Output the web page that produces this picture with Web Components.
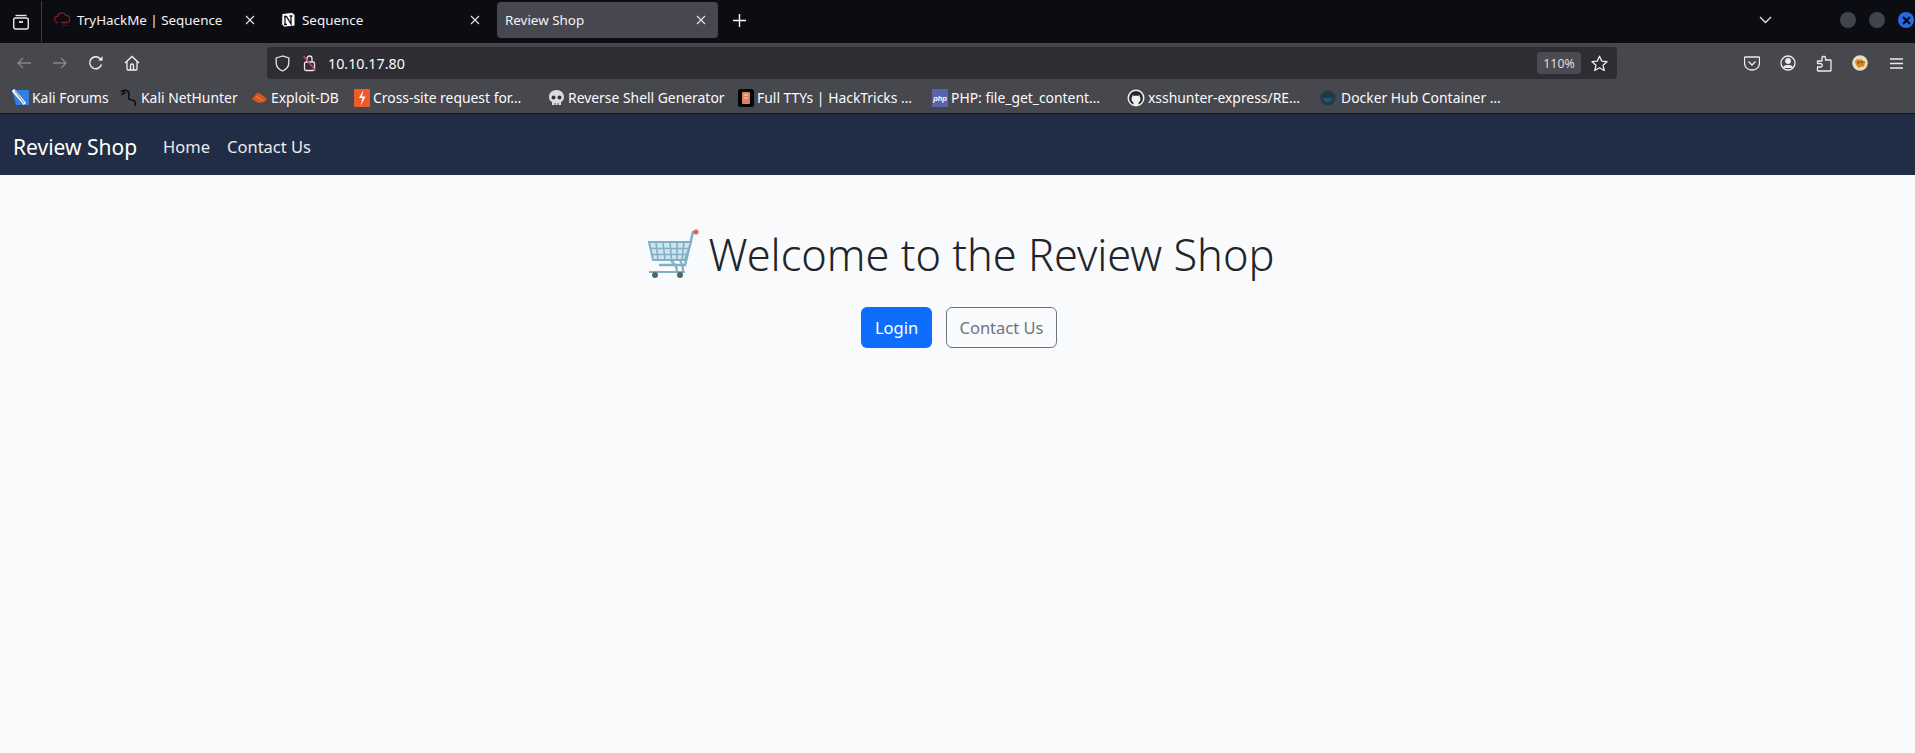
<!DOCTYPE html>
<html lang="en">
<head>
<meta charset="utf-8">
<title>Review Shop</title>
<style>
  html, body { margin: 0; height: 100%; background: #f9fafc; }
  body { font-family: "Noto Sans", "Open Sans", sans-serif; display: flex; flex-direction: column; height: 753px; overflow: hidden; }
</style>
</head>
<body>
<browser-tabs>
  <browser-tab slot="tabs" label="TryHackMe | Sequence" width="225" icon="thm"></browser-tab>
  <browser-tab slot="tabs" label="Sequence" width="225" icon="notion"></browser-tab>
  <browser-tab slot="tabs" label="Review Shop" width="221" active></browser-tab>
</browser-tabs>
<nav-toolbar url="10.10.17.80" zoom="110%"></nav-toolbar>
<bookmark-bar>
  <bookmark-item width="108" icon="kali">Kali Forums</bookmark-item>
  <bookmark-item width="132" icon="hunter">Kali NetHunter</bookmark-item>
  <bookmark-item width="102" icon="exploit">Exploit-DB</bookmark-item>
  <bookmark-item width="194" icon="csrf">Cross-site request for…</bookmark-item>
  <bookmark-item width="190" icon="skull">Reverse Shell Generator</bookmark-item>
  <bookmark-item width="194" icon="book">Full TTYs | HackTricks …</bookmark-item>
  <bookmark-item width="195" icon="php">PHP: file_get_content…</bookmark-item>
  <bookmark-item width="193" icon="github">xsshunter-express/RE…</bookmark-item>
  <bookmark-item width="200" icon="docker">Docker Hub Container …</bookmark-item>
</bookmark-bar>
<shop-navbar brand="Review Shop">
  <a href="#">Home</a>
  <a href="#">Contact Us</a>
</shop-navbar>
<shop-hero></shop-hero>

<script>
const ICONS = {
  thm: `<svg width="18" height="18" viewBox="0 0 18 18" fill="none" stroke="#8c1a20" stroke-width="1.3"><path d="M4 11.5h-.5a3 3 0 0 1 0-6 4.5 4.5 0 0 1 8.4-1.2A3.4 3.4 0 0 1 15.5 8a3 3 0 0 1-2 3.5H7"/><path d="M8 14.500h6" opacity=".5"/></svg>`,
  notion: `<svg width="18" height="18" viewBox="0 0 18 18"><path d="M3 2.5 13 1.5l3 2.2V15l-11 1.2-2.4-3z" fill="#fff" stroke="#111" stroke-width="1"/><path d="M6 5.5v8M6 5.5h1.5l4.5 7.5V5M5 5.5h3M10.5 5h3M5 13.5h3" fill="none" stroke="#111" stroke-width="1.3"/></svg>`,
  kali: `<svg width="17" height="17" viewBox="0 0 17 17"><path d="M0 1h17v15H4z" fill="#2f7fe0"/><path d="M1 1l12 14" stroke="#f4f6f8" stroke-width="3.4"/><path d="M3 2l9 12" stroke="#5b6470" stroke-width=".8"/></svg>`,
  hunter: `<svg width="18" height="18" viewBox="0 0 18 18" fill="none" stroke="#0c0c0c" stroke-width="1.5"><path d="M1 3c3-3 7-2 8 1s-2 4 0 6 5 0 6 3 0 3 0 4"/><path d="M3 1l2 4M1 6l3-2"/></svg>`,
  exploit: `<svg width="16" height="14" viewBox="0 0 16 14"><path d="M0 8l5-6 4 1 6 5-3 3-6 1z" fill="#d5581d"/><path d="M4 5l7 5" stroke="#ec8b4a" stroke-width="1"/></svg>`,
  csrf: `<svg width="16" height="18" viewBox="0 0 16 18"><rect width="16" height="18" rx="1" fill="#ef5a2b"/><path d="M9.500 1 5 9h3.500L6.500 17 11.500 7.500H8z" fill="#fff"/></svg>`,
  skull: `<svg width="17" height="18" viewBox="0 0 17 18"><path d="M8.5 1C4 1 1 4 1 8c0 2.5 1 4 3 5v3h9v-3c2-1 3-2.5 3-5 0-4-3-7-7.5-7z" fill="#dcdcdc"/><circle cx="5.5" cy="8.5" r="2" fill="#333"/><circle cx="11.5" cy="8.5" r="2" fill="#333"/><path d="M7 16v-2M10 16v-2" stroke="#555"/></svg>`,
  book: `<svg width="16" height="18" viewBox="0 0 16 18"><rect width="16" height="18" rx="2.5" fill="#050505"/><rect x="4" y="3" width="8" height="12" rx="1" fill="#e0835c"/><path d="M6 6h4M6 9h4" stroke="#f5d9c5"/></svg>`,
  php: `<svg width="16" height="18" viewBox="0 0 16 18"><rect width="16" height="18" fill="#5a64a8"/><text x="8" y="11.5" text-anchor="middle" font-size="7.5" font-style="italic" font-weight="700" font-family="Liberation Sans, sans-serif" fill="#fff">php</text></svg>`,
  github: `<svg width="18" height="18" viewBox="0 0 18 18"><circle cx="9" cy="9" r="8.5" fill="#f2f2f2"/><circle cx="9" cy="9" r="7" fill="#2a2a2e"/><path d="M6.500 16v-2.500c-1.500-.7-2-2-2-3.500 0-.9.300-1.600.7-2.100-.1-.6 0-1.300.2-1.700.7 0 1.200.3 1.700.7a6 6 0 0 1 3.800 0c.5-.4 1-.7 1.700-.7.200.4.300 1.100.2 1.700.400.500.7 1.200.7 2.100 0 1.500-.5 2.800-2 3.500V16z" fill="#f2f2f2"/></svg>`,
  docker: `<svg width="18" height="18" viewBox="0 0 18 18"><circle cx="8" cy="9" r="7.500" fill="#1d3b4a"/><path d="M3 9h9c0 3-2 4-5 4s-4-2-4-4z" fill="#24566c"/></svg>`
};

class BrowserTabs extends HTMLElement {
  connectedCallback() {
    this.attachShadow({ mode: 'open' });
    this.shadowRoot.innerHTML = `
      <style>
        :host { display: flex; align-items: center; height: 43px; flex: none; background: #0c0c13; color: #fbfbfe; }
        .tabs-btn { width: 42px; height: 41px; flex: none; display: flex; align-items: center; justify-content: center; border-right: 1px solid #3c3c44; box-sizing: border-box; }
        .list { display: flex; align-items: center; height: 100%; }
        .plus { width: 42px; display: flex; justify-content: center; margin-bottom: 3px; }
        .spacer { flex: 1; }
        .chevron { width: 20px; display: flex; justify-content: center; margin-right: 65px; margin-bottom: 3px; }
        .dots { display: flex; gap: 13px; align-items: center; margin-right: 1px; margin-bottom: 3px; }
        .dot { width: 16px; height: 16px; border-radius: 50%; background: #41434e; }
        .dot.close { background: #2a68e4; display: flex; align-items: center; justify-content: center; }
      </style>
      <div class="tabs-btn">
        <svg width="18" height="17" viewBox="0 0 18 17" fill="none" stroke="#e8e8ec" stroke-width="1.4"><rect x="1.7" y="5" width="14.6" height="11" rx="2"/><path d="M3.5 2.5h11"/><path d="M7 9h4" stroke-width="1.8"/></svg>
      </div>
      <div class="list"><slot name="tabs"></slot></div>
      <div class="plus">
        <svg width="13" height="13" viewBox="0 0 13 13" stroke="#fbfbfe" stroke-width="1.4"><path d="M6.5 0v13M0 6.5h13"/></svg>
      </div>
      <div class="spacer"></div>
      <div class="chevron">
        <svg width="13" height="8" viewBox="0 0 13 8" fill="none" stroke="#e6e6ea" stroke-width="1.3"><path d="M1 1l5.5 5.500L12 1"/></svg>
      </div>
      <div class="dots">
        <div class="dot"></div>
        <div class="dot"></div>
        <div class="dot close"><svg width="9" height="9" viewBox="0 0 9 9" stroke="#0c0c13" stroke-width="2.2"><path d="M1 1l7 7M8 1L1 8"/></svg></div>
      </div>
    `;
  }
}

class BrowserTab extends HTMLElement {
  connectedCallback() {
    const active = this.hasAttribute('active');
    const icon = ICONS[this.getAttribute('icon')];
    this.attachShadow({ mode: 'open' });
    this.shadowRoot.innerHTML = `
      <style>
        :host { display: flex; align-items: center; height: 36px; box-sizing: border-box; padding: 0 10px 0 ${active ? 8 : 12}px; width: ${this.getAttribute('width')}px; border-radius: 4px; font-size: 13.4px; color: #f4f4f6; margin-bottom: 3px; ${active ? 'background: #47474f; margin-left: 5px;' : ''} }
        .ic { display: flex; margin-right: 5px; flex: none; }
        .label { flex: 1; white-space: nowrap; }
        .x { flex: none; display: flex; margin-right: 2px; }
      </style>
      ${icon ? `<span class="ic">${icon}</span>` : ''}
      <span class="label">${this.getAttribute('label')}</span>
      <span class="x"><svg width="10" height="10" viewBox="0 0 10 10" stroke="#e4e4e8" stroke-width="1.1"><path d="M1 1l8 8M9 1L1 9"/></svg></span>
    `;
  }
}

class NavToolbar extends HTMLElement {
  connectedCallback() {
    this.attachShadow({ mode: 'open' });
    this.shadowRoot.innerHTML = `
      <style>
        :host { display: flex; align-items: center; height: 32px; padding: 4px 0 1px; flex: none; background: #47474e; box-sizing: content-box; color: #fbfbfe; }
        .nav { display: flex; width: 267px; flex: none; padding-left: 6px; box-sizing: border-box; }
        .nav span { width: 36px; display: flex; justify-content: center; align-items: center; }
        .url { width: 1350px; height: 32px; background: #2d2d33; border-radius: 4px; display: flex; align-items: center; flex: none; box-sizing: border-box; padding-left: 8px; }
        .url .txt { font-size: 14.3px; margin-left: 11px; flex: 1; }
        .shield { display: flex; margin-right: 12px; }
        .lock { display: flex; }
        .badge { width: 44px; height: 22px; background: #4a4a50; border-radius: 3px; font-size: 12.4px; display: flex; align-items: center; justify-content: center; color: #dcdce0; }
        .star { width: 36px; display: flex; justify-content: center; }
        .right { display: flex; margin-left: 117px; }
        .right span { width: 36px; display: flex; justify-content: center; align-items: center; }
      </style>
      <div class="nav">
        <span><svg width="16" height="14" viewBox="0 0 16 14" fill="none" stroke="#85858b" stroke-width="1.3"><path d="M15 7H2M7 2 2 7l5 5"/></svg></span>
        <span><svg width="16" height="14" viewBox="0 0 16 14" fill="none" stroke="#85858b" stroke-width="1.3"><path d="M1 7h13M9 2l5 5-5 5"/></svg></span>
        <span><svg width="16" height="16" viewBox="0 0 16 16" fill="none" stroke="#f0f0f4" stroke-width="1.4"><path d="M13.500 9.500A6 6 0 1 1 12 3.500l2 1.800"/><path d="M14.500 1.200v4.400h-4.400z" fill="#f0f0f4" stroke="none"/></svg></span>
        <span><svg width="16" height="16" viewBox="0 0 16 16" fill="none" stroke="#f0f0f4" stroke-width="1.3"><path d="M1 8l7-6.500L15 8M3 6.500V14a1 1 0 0 0 1 1h8a1 1 0 0 0 1-1V6.500M6.500 15v-4.500a1.500 1.500 0 0 1 3 0V15"/></svg></span>
      </div>
      <div class="url">
        <span class="shield"><svg width="15" height="17" viewBox="0 0 15 17" fill="none" stroke="#e6e6ea" stroke-width="1.3"><path d="M7.500 1 1.200 3v5c0 4 3 6.500 6.300 8 3.300-1.500 6.300-4 6.300-8V3z"/></svg></span>
        <span class="lock"><svg width="15" height="18" viewBox="0 0 15 18" fill="none"><rect x="2.500" y="8" width="10" height="8.500" rx="1.500" stroke="#e6e6ea" stroke-width="1.3"/><path d="M5 8V4.500a2.500 2.500 0 0 1 5 0V8" stroke="#e6e6ea" stroke-width="1.3"/><path d="M1.500 2 13.500 16.500" stroke="#e0405a" stroke-width="1.3"/></svg></span>
        <span class="txt">${this.getAttribute('url')}</span>
        <span class="badge">${this.getAttribute('zoom')}</span>
        <span class="star"><svg width="17" height="17" viewBox="0 0 17 17" fill="none" stroke="#ececf0" stroke-width="1.3" stroke-linejoin="round"><path d="M8.500 1.200l2.200 4.900 5.300.6-4 3.500 1.200 5.300-4.700-2.800-4.700 2.800L5 10.200 1 6.700l5.300-.6z"/></svg></span>
      </div>
      <div class="right">
        <span><svg width="16" height="15" viewBox="0 0 16 15" fill="none" stroke="#ececf0" stroke-width="1.3"><path d="M1 1h14a.5.5 0 0 1 .5.500V7a7 7 0 0 1-7.500 7A7 7 0 0 1 .5 7V1.500A.5.500 0 0 1 1 1z"/><path d="M4.500 5.500 8 9l3.500-3.500"/></svg></span>
        <span><svg width="16" height="16" viewBox="0 0 16 16" fill="none" stroke="#ececf0" stroke-width="1.3"><circle cx="8" cy="8" r="7"/><circle cx="8" cy="6" r="2.300" fill="#ececf0"/><path d="M3.500 11.500c1-1.200 2.500-1.500 4.500-1.500s3.500.3 4.500 1.500V13h-9z" fill="#ececf0" stroke="none"/></svg></span>
        <span><svg width="16" height="17" viewBox="0 0 16 17" fill="none" stroke="#ececf0" stroke-width="1.3" stroke-linejoin="round"><path d="M7 1.500h1.500a1 1 0 0 1 1 1V5H14.500a.5.500 0 0 1 .5.500V15.500a.5.500 0 0 1-.5.500H2a.5.500 0 0 1-.5-.5V12H4.500a1.500 1.500 0 0 0 0-3.500H1.500V6H6V2.500a1 1 0 0 1 1-1z"/></svg></span>
        <span><svg width="16" height="16" viewBox="0 0 16 16"><circle cx="8" cy="8" r="7.800" fill="#e9dcc4"/><path d="M3 6c1-1 2-1 3-2l1.500 1L9 3.500l1 2 3 .5c.5 2.500-.5 5-2.500 6l-2-.5-1 1.500C5 12 3.500 9 3 6z" fill="#d9841c"/><circle cx="6.500" cy="7.500" r=".9" fill="#6a3a10"/><circle cx="10" cy="7" r=".9" fill="#6a3a10"/></svg></span>
        <span><svg width="13" height="11" viewBox="0 0 13 11" stroke="#ececf0" stroke-width="1.3"><path d="M0 1h13M0 5.500h13M0 10h13"/></svg></span>
      </div>
    `;
  }
}

class BookmarkBar extends HTMLElement {
  connectedCallback() {
    this.attachShadow({ mode: 'open' });
    this.shadowRoot.innerHTML = `
      <style>
        :host { display: flex; align-items: center; height: 31px; padding: 2px 0 0 12px; flex: none; background: #47474e; color: #fbfbfe; font-size: 13.9px; border-bottom: 1px solid #10141c; box-sizing: content-box; }
      </style>
      <slot></slot>
    `;
  }
}

class BookmarkItem extends HTMLElement {
  connectedCallback() {
    this.attachShadow({ mode: 'open' });
    this.shadowRoot.innerHTML = `
      <style>
        :host { display: flex; align-items: center; flex: none; width: ${this.getAttribute('width')}px; white-space: nowrap; }
        .ic { display: flex; flex: none; margin-right: 3px; }
      </style>
      <span class="ic">${ICONS[this.getAttribute('icon')] || ''}</span>
      <slot></slot>
    `;
  }
}

class ShopNavbar extends HTMLElement {
  connectedCallback() {
    this.attachShadow({ mode: 'open' });
    this.shadowRoot.innerHTML = `
      <style>
        :host { display: flex; align-items: center; height: 57px; padding: 4px 0 0 13px; flex: none; background: #212d44; color: #fff; }
        .brand { font-size: 21px; margin-right: 26px; white-space: nowrap; }
        .links { display: flex; gap: 17px; font-size: 16.5px; }
        ::slotted(a) { color: #e9ecf1; text-decoration: none; }
      </style>
      <span class="brand">${this.getAttribute('brand')}</span>
      <div class="links"><slot></slot></div>
    `;
  }
}

class ShopHero extends HTMLElement {
  connectedCallback() {
    this.attachShadow({ mode: 'open' });
    this.shadowRoot.innerHTML = `
      <style>
        :host { display: flex; flex-direction: column; align-items: center; flex: 1; background: #f9fafc; padding-top: 45px; box-sizing: border-box; color: #212529; }
        h1 { margin: 0 0 17px 6px; font-size: 43.3px; font-weight: 350; line-height: 70px; display: flex; align-items: center; gap: 10px; white-space: nowrap; }
        .actions { display: flex; gap: 14px; margin-left: 3px; }
        .btn { height: 41px; box-sizing: border-box; border-radius: 6px; display: flex; align-items: center; justify-content: center; font-size: 16.5px; }
        .login { width: 71px; background: #0d6efd; color: #fff; }
        .contact { width: 111px; border: 1px solid #6c757d; color: #6c757d; }
      </style>
      <h1>
        <svg width="52" height="52" viewBox="0 0 52 52" fill="none">
          <path d="M51 2 46 3 38 36H12" stroke="#7fb0c6" stroke-width="2.5"/>
          <path d="M2 13 44 13 38 31H6z" fill="#cfe3ec" stroke="#7fb0c6" stroke-width="2"/>
          <path d="M9 13l2 18M16 13l2 18M23 13l1.5 18M30 13l0 18M37 13l-2 18M3.5 19.5H42M5 25.5H40" stroke="#7fb0c6" stroke-width="1.6"/>
          <path d="M24 32c3 2 6 5 6 10M33 32c2 2 3 5 3 10M2 43h36" stroke="#7fb0c6" stroke-width="2.2"/>
          <circle cx="8" cy="46" r="3" fill="#56636b"/>
          <circle cx="33" cy="46" r="3" fill="#56636b"/>
          <circle cx="49" cy="3" r="2.5" fill="#e0605e"/>
        </svg>
        <span>Welcome to the Review Shop</span>
      </h1>
      <div class="actions">
        <div class="btn login">Login</div>
        <div class="btn contact">Contact Us</div>
      </div>
    `;
  }
}

customElements.define('browser-tabs', BrowserTabs);
customElements.define('browser-tab', BrowserTab);
customElements.define('nav-toolbar', NavToolbar);
customElements.define('bookmark-bar', BookmarkBar);
customElements.define('bookmark-item', BookmarkItem);
customElements.define('shop-navbar', ShopNavbar);
customElements.define('shop-hero', ShopHero);
</script>
</body>
</html>
